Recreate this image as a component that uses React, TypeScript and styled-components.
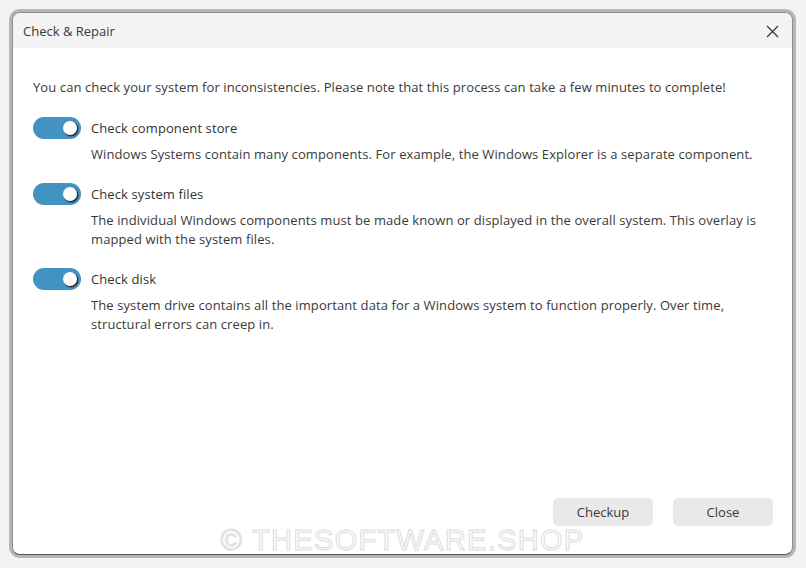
import styled, { createGlobalStyle } from 'styled-components';

const GlobalStyle = createGlobalStyle`
  html, body {
    margin: 0;
    padding: 0;
    background: #f3f3f3;
  }
  body {
    font-family: "Open Sans", "Noto Sans", sans-serif;
    color: #333;
  }
`;

const Page = styled.div`
  padding: 12px 13px 13px 12px;
  height: 568px;
  box-sizing: border-box;
`;

const Window = styled.div`
  position: relative;
  height: 100%;
  box-sizing: border-box;
  display: flex;
  flex-direction: column;
  background: #fff;
  border: 1px solid #8c8c8c;
  border-bottom-color: #555;
  border-radius: 8px;
  box-shadow: 0 0 0 3px #b6b6b6;
  overflow: hidden;
`;

const TitleBar = styled.div`
  height: 35px;
  flex: none;
  display: flex;
  align-items: center;
  justify-content: space-between;
  padding: 1px 12px 0 10px;
  box-sizing: border-box;
  background: #f3f3f3;
  font-size: 13px;
  color: #3a3a3a;
`;

const CloseX = styled.button`
  border: none;
  background: none;
  padding: 0;
  width: 16px;
  height: 16px;
  display: flex;
  align-items: center;
  justify-content: center;
  cursor: pointer;
`;

const Body = styled.div`
  flex: 1;
  display: flex;
  flex-direction: column;
  padding: 30px 19px 0 20px;
  font-size: 13px;
  letter-spacing: 0.1px;
`;

const Intro = styled.p`
  margin: 0 0 20px 0;
  line-height: 19px;
  color: #3a3a3a;
`;

const Option = styled.div`
  display: grid;
  grid-template-columns: 48px 1fr;
  column-gap: 10px;
  margin-bottom: 19px;
`;

const Toggle = styled.div<{ $on: boolean }>`
  width: 48px;
  height: 22px;
  border-radius: 11px;
  background: ${(p) => (p.$on ? '#4292c2' : '#ccc')};
  display: flex;
  align-items: center;
  justify-content: ${(p) => (p.$on ? 'flex-end' : 'flex-start')};
  padding: 0 4px;
  box-sizing: border-box;
`;

const Knob = styled.div`
  width: 14px;
  height: 14px;
  border-radius: 50%;
  background: #fff;
  box-shadow: 1px 1px 0 0.5px #333;
`;

const Label = styled.div`
  line-height: 22px;
  color: #333;
`;

const Desc = styled.div`
  grid-column: 2;
  margin-top: 6px;
  line-height: 19px;
  color: #3a3a3a;
`;

const Footer = styled.div`
  margin-top: auto;
  display: flex;
  justify-content: flex-end;
  gap: 20px;
  padding: 0 0 28px 0;
`;

const Button = styled.button`
  width: 100px;
  height: 28px;
  border: none;
  border-radius: 5px;
  background: #e9e9e9;
  font-family: inherit;
  font-size: 13px;
  color: #3a3a3a;
`;

const Watermark = styled.div`
  position: absolute;
  left: 0;
  right: 0;
  bottom: -3px;
  text-align: center;
  font-family: "Liberation Sans", Arial, sans-serif;
  font-size: 29px;
  letter-spacing: 1.3px;
  color: #fff;
  -webkit-text-stroke: 1px #dcdcdc;
  pointer-events: none;
`;

const options = [
  {
    label: 'Check component store',
    desc: 'Windows Systems contain many components. For example, the Windows Explorer is a separate component.',
  },
  {
    label: 'Check system files',
    desc: 'The individual Windows components must be made known or displayed in the overall system. This overlay is mapped with the system files.',
  },
  {
    label: 'Check disk',
    desc: 'The system drive contains all the important data for a Windows system to function properly. Over time, structural errors can creep in.',
  },
];

export default function App() {
  return (
    <>
      <GlobalStyle />
      <Page>
        <Window>
          <TitleBar>
            <span>Check &amp; Repair</span>
            <CloseX aria-label="Close">
              <svg width="13" height="13" viewBox="0 0 13 13">
                <path d="M1 1 L12 12 M12 1 L1 12" stroke="#333" strokeWidth="1.1" />
              </svg>
            </CloseX>
          </TitleBar>
          <Body>
            <Intro>
              You can check your system for inconsistencies. Please note that this process can take a few minutes to complete!
            </Intro>
            {options.map((o) => (
              <Option key={o.label}>
                <Toggle $on>
                  <Knob />
                </Toggle>
                <Label>{o.label}</Label>
                <Desc>{o.desc}</Desc>
              </Option>
            ))}
            <Footer>
              <Button>Checkup</Button>
              <Button>Close</Button>
            </Footer>
          </Body>
          <Watermark>© THESOFTWARE.SHOP</Watermark>
        </Window>
      </Page>
    </>
  );
}
